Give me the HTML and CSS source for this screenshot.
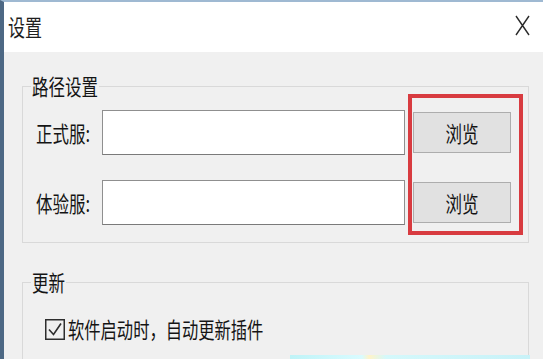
FILE: index.html
```html
<!DOCTYPE html>
<html lang="zh-CN">
<head>
<meta charset="utf-8">
<title>设置</title>
<link rel="stylesheet" href="styles.css">
</head>
<body>
<div class="window">
  <div class="titlebar">
    <span class="title t">设置</span>
    <svg class="close" width="15" height="21" viewBox="0 0 15 21"><path d="M1 1 L14 20 M14 1 L1 20" stroke="#2b2b2b" stroke-width="1.4" fill="none"/></svg>
  </div>
  <div class="content">
    <fieldset class="group paths">
      <legend><span class="t">路径设置</span></legend>
      <div class="row">
        <span class="label"><span class="t">正式服:</span></span>
        <div class="input"></div>
        <button class="btn"><span class="t">浏览</span></button>
      </div>
      <div class="row second">
        <span class="label"><span class="t">体验服:</span></span>
        <div class="input"></div>
        <button class="btn"><span class="t">浏览</span></button>
      </div>
    </fieldset>
    <fieldset class="group update">
      <legend><span class="t">更新</span></legend>
      <div class="check">
        <svg class="box" width="20" height="21" viewBox="0 0 20 21"><rect x="0.75" y="0.75" width="18.5" height="19.5" fill="none" stroke="#2e2e2e" stroke-width="1.5"/><path d="M4 10.5 L8.5 15.5 L16 4.5" fill="none" stroke="#2e2e2e" stroke-width="1.6"/></svg>
        <span class="t">软件启动时，自动更新插件</span>
      </div>
    </fieldset>
  </div>
  <div class="highlight"></div>
  <div class="desk"></div>
</div>
</body>
</html>
```

FILE: styles.css
```css
html, body {
  margin: 0;
  padding: 0;
}
body {
  width: 543px;
  height: 359px;
  overflow: hidden;
  background: #f0f0f0;
  font-family: "Noto Sans CJK SC", "Noto Sans", sans-serif;
  color: #141414;
}
.t {
  display: inline-block;
  transform: scaleY(1.32);
}
.window {
  position: relative;
  width: 543px;
  height: 359px;
  box-sizing: border-box;
  border-left: 4px solid #4d6884;
  border-top: 2px solid #9fb9d2;
  background: #f0f0f0;
  overflow: hidden;
}
.titlebar {
  height: 50px;
  background: #ffffff;
  display: flex;
  align-items: flex-start;
}
.title {
  font-size: 17px;
  line-height: 24px;
  margin-top: 13px;
  margin-left: 4px;
  color: #1e1e1e;
}
.close {
  margin-left: auto;
  margin-right: 13px;
  margin-top: 13px;
}
.content {
  padding-top: 22px;
}
.group {
  margin: 0 0 0 18px;
  width: 507px;
  box-sizing: border-box;
  border: 1px solid #d9d9d9;
  padding: 0 0 17px 8px;
  min-width: 0;
}
.group legend {
  font-size: 16.5px;
  line-height: 24px;
  padding: 0 1px;
  color: #141414;
}
.row {
  display: flex;
  align-items: center;
  height: 45px;
  padding-top: 12px;
  padding-left: 5px;
}
.row.second {
  padding-top: 25px;
}
.label {
  width: 66px;
  font-size: 16.5px;
  line-height: 24px;
}
.input {
  width: 303px;
  height: 45px;
  box-sizing: border-box;
  background: #ffffff;
  border: 1px solid #8f8f8f;
  border-bottom-color: #7a7a7a;
}
.btn {
  margin: 0 0 0 8px;
  width: 98px;
  height: 41px;
  box-sizing: border-box;
  background: #e1e1e1;
  border: 1px solid #adadad;
  font-family: "Noto Sans CJK SC", "Noto Sans", sans-serif;
  font-size: 16.5px;
  line-height: 24px;
  color: #141414;
  padding: 0;
}
.update {
  margin-top: 27px;
  height: 120px;
}
.check {
  display: flex;
  align-items: center;
  padding-top: 23px;
  padding-left: 14px;
  font-size: 16.3px;
  line-height: 24px;
}
.box {
  margin-right: 3px;
}
.highlight {
  position: absolute;
  left: 404px;
  top: 92px;
  width: 115px;
  height: 141px;
  box-sizing: border-box;
  border: 4px solid #d83b40;
}
.desk {
  position: absolute;
  left: 286px;
  top: 353px;
  width: 240px;
  height: 6px;
  background: linear-gradient(90deg, #bff3f7, #d9fbff 30%, #fff3c8 33%, #d4f8fb 40%, #c8f2f8);
}
```
